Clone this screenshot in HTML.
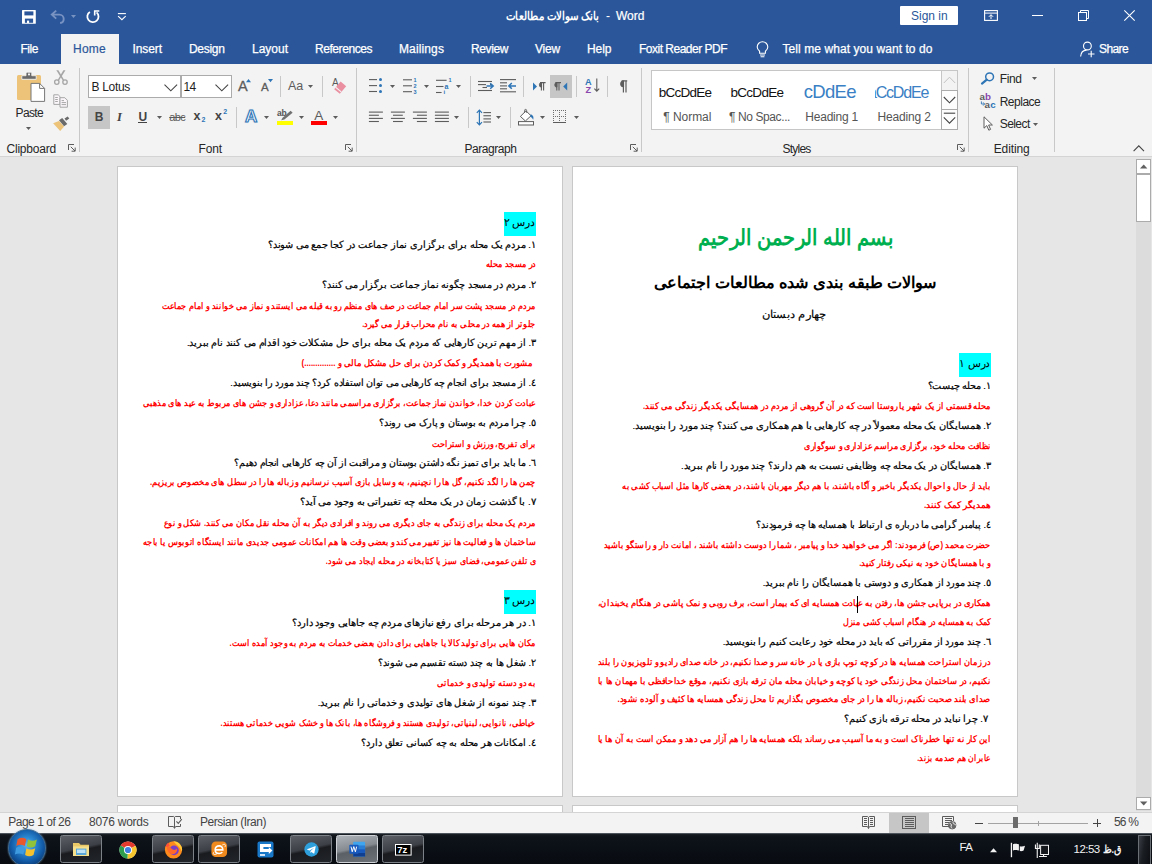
<!DOCTYPE html>
<html lang="en"><head><meta charset="utf-8"><title>Word</title><style>
*{box-sizing:border-box;margin:0;padding:0}
html,body{width:1152px;height:864px;overflow:hidden;background:#e6e6e6;font-family:"Liberation Sans",sans-serif;font-size:12px;color:#262626}
#root{position:relative;width:1152px;height:864px;overflow:hidden}
.a{position:absolute;display:block}
.t{position:absolute;display:block;white-space:nowrap;line-height:1.2}
svg{overflow:visible}
</style></head>
<body>
<div id="root">
<div class="a" style="left:0px;top:0px;width:1152px;height:64px;background:#2b579a;"></div>
<div class="a" style="left:0px;top:64px;width:1152px;height:93px;background:#f3f3f3;border-bottom:1px solid #d4d4d4;"></div>
<div class="a" style="left:61px;top:34px;width:58px;height:30px;background:#f3f3f3;"></div>
<svg class="a" style="left:22px;top:10px;" width="14" height="14" viewBox="0 0 14 14"><rect x="0" y="0" width="13.8" height="13.8" rx="0.6" fill="#fff"/><rect x="2.4" y="1.4" width="9" height="4" fill="#2b579a"/><rect x="2.9" y="8.6" width="8.2" height="4.2" fill="#2b579a"/><rect x="5" y="10.6" width="2.1" height="2.4" fill="#fff"/></svg>
<svg class="a" style="left:50px;top:9px;" width="17" height="16" viewBox="0 0 17 16"><path d="M6.2 1.6L1.8 5.6L6.2 9.6M2.4 5.6H9.4a4.3 4.3 0 0 1 4.3 4.3a4.2 4.2 0 0 1-3.6 4.1" fill="none" stroke="#7892c2" stroke-width="1.9"/></svg>
<svg class="a" style="left:70.5px;top:15.2px;" width="6" height="4" viewBox="0 0 6 4"><path d="M0 0h5L2.5 3z" fill="#7892c2"/></svg>
<svg class="a" style="left:85px;top:9px;" width="16" height="16" viewBox="0 0 16 16"><path d="M4.9 2.9A5.6 5.6 0 1 0 11.6 3.4" fill="none" stroke="#fff" stroke-width="1.8"/><path d="M9.7 6.6V2h4.6" fill="none" stroke="#fff" stroke-width="1.6"/></svg>
<svg class="a" style="left:117px;top:12px;" width="10" height="9" viewBox="0 0 10 9"><path d="M0.9 1.6h8" stroke="#fff" stroke-width="1.1"/><path d="M1.1 4.2l3.8 3.5l3.8-3.5" fill="none" stroke="#fff" stroke-width="1.1"/></svg>
<svg class="a" style="left:500px;top:4px;" width="104" height="24" viewBox="0 0 104 24"><text x="98.8" y="15.8" direction="rtl" font-family="Liberation Sans,sans-serif" font-weight="bold" font-size="11.5" fill="#fff" textLength="93" lengthAdjust="spacingAndGlyphs">بانک سوالات مطالعات</text></svg>
<span class="t" style="left:606px;top:9.0px;font-size:12px;color:#fff;">-</span>
<span class="t" style="left:616px;top:9.0px;font-size:12px;color:#fff;-webkit-text-stroke:0.2px #fff;">Word</span>
<div class="a" style="left:900px;top:6px;width:58px;height:19px;background:#fff;border-radius:1px;"></div>
<span class="t" style="left:911px;top:8.5px;font-size:12px;color:#2b579a;">Sign in</span>
<svg class="a" style="left:984px;top:10px;" width="14" height="11" viewBox="0 0 14 11"><rect x="0.6" y="0.6" width="12.8" height="9.8" fill="none" stroke="#fff" stroke-width="1.1"/><path d="M0.6 3.1h12.8" stroke="#fff" stroke-width="1"/><path d="M7 9V4.8M4.9 6.8L7 4.7l2.1 2.1" fill="none" stroke="#fff" stroke-width="1"/></svg>
<div class="a" style="left:1032px;top:15px;width:11px;height:1px;background:#fff;"></div>
<svg class="a" style="left:1077.5px;top:10px;" width="11" height="11" viewBox="0 0 11 11"><path d="M2.5 2.5V0.5h8v8h-2" fill="none" stroke="#fff" stroke-width="1"/><rect x="0.5" y="2.5" width="8" height="8" fill="none" stroke="#fff" stroke-width="1"/></svg>
<svg class="a" style="left:1123.5px;top:10px;" width="11" height="11" viewBox="0 0 11 11"><path d="M0.3 0.3l10.4 10.4M10.7 0.3L0.3 10.7" stroke="#fff" stroke-width="1.1"/></svg>
<span class="t" style="left:20.5px;top:41.5px;font-size:12px;color:#fff;-webkit-text-stroke:0.25px #fff;letter-spacing:-0.461px;">File</span>
<span class="t" style="left:132.5px;top:41.5px;font-size:12px;color:#fff;-webkit-text-stroke:0.25px #fff;letter-spacing:-0.086px;">Insert</span>
<span class="t" style="left:189px;top:41.5px;font-size:12px;color:#fff;-webkit-text-stroke:0.25px #fff;letter-spacing:-0.31px;">Design</span>
<span class="t" style="left:252px;top:41.5px;font-size:12px;color:#fff;-webkit-text-stroke:0.25px #fff;letter-spacing:-0.005px;">Layout</span>
<span class="t" style="left:315px;top:41.5px;font-size:12px;color:#fff;-webkit-text-stroke:0.25px #fff;letter-spacing:-0.438px;">References</span>
<span class="t" style="left:399px;top:41.5px;font-size:12px;color:#fff;-webkit-text-stroke:0.25px #fff;letter-spacing:0.123px;">Mailings</span>
<span class="t" style="left:471px;top:41.5px;font-size:12px;color:#fff;-webkit-text-stroke:0.25px #fff;letter-spacing:-0.393px;">Review</span>
<span class="t" style="left:535px;top:41.5px;font-size:12px;color:#fff;-webkit-text-stroke:0.25px #fff;letter-spacing:-0.199px;">View</span>
<span class="t" style="left:587px;top:41.5px;font-size:12px;color:#fff;-webkit-text-stroke:0.25px #fff;letter-spacing:-0.047px;">Help</span>
<span class="t" style="left:639px;top:41.5px;font-size:12px;color:#fff;-webkit-text-stroke:0.25px #fff;letter-spacing:-0.502px;">Foxit Reader PDF</span>
<span class="t" style="left:782.5px;top:41.5px;font-size:12px;color:#fff;-webkit-text-stroke:0.25px #fff;letter-spacing:0.071px;">Tell me what you want to do</span>
<span class="t" style="left:1099px;top:41.5px;font-size:12px;color:#fff;-webkit-text-stroke:0.25px #fff;letter-spacing:-0.606px;">Share</span>
<span class="t" style="left:73px;top:41.5px;font-size:12px;color:#2b579a;-webkit-text-stroke:0.2px #2b579a;letter-spacing:0.246px;">Home</span>
<svg class="a" style="left:756px;top:41px;" width="13" height="17" viewBox="0 0 13 17"><path d="M3.6 10.2C2 9 1.2 7.6 1.2 6a5.3 5.3 0 0 1 10.6 0c0 1.6-0.8 3-2.4 4.2v2H3.6z" fill="none" stroke="#fff" stroke-width="1.1"/><path d="M4 14h5M4.6 15.8h3.8" stroke="#fff" stroke-width="1.1"/></svg>
<svg class="a" style="left:1080px;top:41px;" width="15" height="17" viewBox="0 0 15 17"><circle cx="7.4" cy="5" r="3.9" fill="none" stroke="#fff" stroke-width="1.1"/><path d="M0.6 15.5c0.3-4 3-6.3 6-6.4" fill="none" stroke="#fff" stroke-width="1.1"/><path d="M8 13h6.5M11.2 9.8v6.4" stroke="#fff" stroke-width="1.1"/></svg>
<svg class="a" style="left:16px;top:71px;" width="30" height="32" viewBox="0 0 30 32"><rect x="1" y="4" width="24" height="25" rx="1.5" fill="#ecc378"/><path d="M5.8 8.3V4.7h4.2V2.6a1.4 1.4 0 0 1 1.4-1.4h3a1.4 1.4 0 0 1 1.4 1.4v2.1h4.4v3.6z" fill="#6a6a6a" stroke="#f3f3f3" stroke-width="0.9"/><rect x="12" y="2.5" width="2" height="1.8" fill="#f3f3f3"/><path d="M15 12.4h8.6l5 5V30.4H15z" fill="#fff" stroke="#777" stroke-width="1"/><path d="M23.6 12.4v5h5" fill="none" stroke="#777" stroke-width="1"/></svg>
<span class="t" style="left:15.6px;top:106.3px;font-size:12px;color:#262626;letter-spacing:-0.658px;">Paste</span>
<svg class="a" style="left:26px;top:127px;" width="6" height="4" viewBox="0 0 6 4"><path d="M0 0h5L2.5 3z" fill="#5c5c5c"/></svg>
<svg class="a" style="left:53px;top:70px;" width="16" height="15" viewBox="0 0 16 15"><path d="M3.3 0.2L5.4 0.2L11 9.8L9.8 10.6z" fill="#a6a6a6"/><path d="M12.5 0.2L10.4 0.2L4.8 9.8L6 10.6z" fill="#a6a6a6"/><circle cx="3.8" cy="12.1" r="2.2" fill="none" stroke="#a6a6a6" stroke-width="1.3"/><circle cx="12" cy="12.1" r="2.2" fill="none" stroke="#a6a6a6" stroke-width="1.3"/></svg>
<svg class="a" style="left:53px;top:94px;" width="16" height="14" viewBox="0 0 16 14"><path d="M0.8 0.8h4.4l1.8 1.8v7.8h-6.2z" fill="#faf6fa" stroke="#a6a6a6" stroke-width="1"/><path d="M7 3.7h4.8l2.6 2.6v6.9H7z" fill="#faf6fa" stroke="#a6a6a6" stroke-width="1"/><path d="M2.2 3.5h2.6M2.2 5.5h2.6M2.2 7.5h2.6M8.6 6.6h2.4M8.6 8.6h4.4M8.6 10.6h4.4" stroke="#a6a6a6" stroke-width="1"/></svg>
<svg class="a" style="left:53px;top:116px;" width="17" height="15.4" viewBox="0 0 17 15.4"><path d="M0.1 7.3L6 5.1l5.1 5.5L7.2 15z" fill="#ecc378"/><path d="M6 4.3L9.2 2l5.1 5.9l-3.2 2.3z" fill="#6a6a6a"/><path d="M11.5 2.4l3.2-2l1.6 2l-3.2 2.3z" fill="#6a6a6a"/></svg>
<span class="t" style="left:6.5px;top:141.7px;font-size:12px;color:#262626;letter-spacing:-0.208px;">Clipboard</span>
<svg class="a" style="left:68px;top:144px;" width="8" height="8" viewBox="0 0 8 8"><path d="M0.5 6V0.5H6" fill="none" stroke="#5c5c5c" stroke-width="1"/><path d="M2.8 2.8L7 7M7.2 3.6V7.2H3.6" fill="none" stroke="#5c5c5c" stroke-width="1"/></svg>
<div class="a" style="left:79px;top:68px;width:1px;height:84px;background:#c8c8c8;"></div>
<div class="a" style="left:88px;top:75px;width:93px;height:23px;background:#fff;border:1px solid #ababab;"></div>
<div class="a" style="left:181px;top:75px;width:51px;height:23px;background:#fff;border:1px solid #ababab;"></div>
<span class="t" style="left:91.6px;top:79.5px;font-size:12px;color:#1e1e1e;letter-spacing:-0.329px;">B Lotus</span>
<span class="t" style="left:183.6px;top:79.5px;font-size:12px;color:#1e1e1e;letter-spacing:-0.68px;">14</span>
<svg class="a" style="left:164px;top:83.5px;" width="14" height="8" viewBox="0 0 14 8"><path d="M0.5 0.6L6.8 6.8L13.1 0.6" fill="none" stroke="#444" stroke-width="1.1"/></svg>
<svg class="a" style="left:215px;top:83.5px;" width="14" height="8" viewBox="0 0 14 8"><path d="M0.5 0.6L6.8 6.8L13.1 0.6" fill="none" stroke="#444" stroke-width="1.1"/></svg>
<span class="t" style="left:238px;top:78.0px;font-size:14.5px;color:#5c5c5c;-webkit-text-stroke:0.3px #5c5c5c;letter-spacing:0.128px;">A</span>
<svg class="a" style="left:246px;top:79px;" width="6" height="4" viewBox="0 0 6 4"><path d="M0 3.2h5L2.5 0z" fill="#2e75b6"/></svg>
<span class="t" style="left:261px;top:80.8px;font-size:11.5px;color:#5c5c5c;-webkit-text-stroke:0.3px #5c5c5c;letter-spacing:0.128px;">A</span>
<svg class="a" style="left:267.8px;top:79px;" width="6" height="4" viewBox="0 0 6 4"><path d="M0 0h5L2.5 3.2z" fill="#2e75b6"/></svg>
<div class="a" style="left:280px;top:76px;width:1px;height:21px;background:#c8c8c8;"></div>
<span class="t" style="left:288px;top:78.8px;font-size:12.5px;color:#5c5c5c;letter-spacing:-0.148px;">Aa</span>
<svg class="a" style="left:308px;top:85px;" width="6" height="4" viewBox="0 0 6 4"><path d="M0 0h5L2.5 3z" fill="#5c5c5c"/></svg>
<div class="a" style="left:322px;top:76px;width:1px;height:21px;background:#c8c8c8;"></div>
<span class="t" style="left:332px;top:77.0px;font-size:10px;color:#5c5c5c;letter-spacing:-0.272px;">A</span>
<svg class="a" style="left:333px;top:81px;" width="14" height="13" viewBox="0 0 14 13"><path d="M7.6 0.6l5.6 4.6l-6.4 7.6l-5.6-4.6z" fill="#ea8fa0"/><path d="M2.6 6.2l5.6 4.6" stroke="#f3f3f3" stroke-width="1.1"/></svg>
<div class="a" style="left:88px;top:106px;width:22px;height:23px;background:#c6c6c6;"></div>
<span class="t" style="left:94.8px;top:109.7px;font-size:12px;color:#444;font-weight:bold;letter-spacing:-1.172px;">B</span>
<span class="t" style="left:117px;top:109.7px;font-size:12.5px;color:#444;font-style:italic;font-family:'Liberation Serif',serif;font-weight:bold;letter-spacing:1.5px;">I</span>
<span class="t" style="left:138.4px;top:109.5px;font-size:12px;color:#444;font-weight:bold;letter-spacing:-0.272px;">U</span>
<div class="a" style="left:138px;top:121.8px;width:9px;height:1.2px;background:#444;"></div>
<svg class="a" style="left:157px;top:116px;" width="6" height="4" viewBox="0 0 6 4"><path d="M0 0h5L2.5 3z" fill="#5c5c5c"/></svg>
<span class="t" style="left:169.2px;top:110.5px;font-size:11px;color:#5c5c5c;text-decoration:line-through;letter-spacing:-0.583px;">abc</span>
<span class="t" style="left:193.4px;top:109.3px;font-size:12.5px;color:#444;font-weight:bold;letter-spacing:0.247px;">x</span>
<span class="t" style="left:201.4px;top:116.1px;font-size:7px;color:#2e75b6;font-weight:bold;">2</span>
<span class="t" style="left:215px;top:109.3px;font-size:12.5px;color:#444;font-weight:bold;letter-spacing:0.247px;">x</span>
<span class="t" style="left:223.2px;top:108.3px;font-size:7px;color:#2e75b6;font-weight:bold;">2</span>
<div class="a" style="left:236px;top:107px;width:1px;height:21px;background:#c8c8c8;"></div>
<span class="t" style="left:245px;top:107px;font-size:17px;font-weight:bold;color:#fff;-webkit-text-stroke:1.1px #2e75b6;text-shadow:0 0 2px #9ec3ea;letter-spacing:0.719px;">A</span>
<svg class="a" style="left:264px;top:116px;" width="6" height="4" viewBox="0 0 6 4"><path d="M0 0h5L2.5 3z" fill="#5c5c5c"/></svg>
<span class="t" style="left:277px;top:108.2px;font-size:8.5px;color:#555;font-weight:bold;letter-spacing:-0.161px;">ab</span>
<svg class="a" style="left:280px;top:110px;" width="14" height="11" viewBox="0 0 14 11"><path d="M1.2 10.2l1.4-2.4L10.6 0.8l2 2L4.4 9.6z" fill="#707070"/></svg>
<div class="a" style="left:277px;top:121px;width:16px;height:4px;background:#ffff00;"></div>
<svg class="a" style="left:299px;top:116px;" width="6" height="4" viewBox="0 0 6 4"><path d="M0 0h5L2.5 3z" fill="#5c5c5c"/></svg>
<span class="t" style="left:314.3px;top:107.8px;font-size:13.5px;color:#5c5c5c;letter-spacing:0.584px;">A</span>
<div class="a" style="left:311px;top:121px;width:16px;height:4px;background:#ff0000;"></div>
<svg class="a" style="left:333px;top:116px;" width="6" height="4" viewBox="0 0 6 4"><path d="M0 0h5L2.5 3z" fill="#5c5c5c"/></svg>
<span class="t" style="left:198.6px;top:141.7px;font-size:12px;color:#262626;letter-spacing:-0.204px;">Font</span>
<svg class="a" style="left:345px;top:144px;" width="8" height="8" viewBox="0 0 8 8"><path d="M0.5 6V0.5H6" fill="none" stroke="#5c5c5c" stroke-width="1"/><path d="M2.8 2.8L7 7M7.2 3.6V7.2H3.6" fill="none" stroke="#5c5c5c" stroke-width="1"/></svg>
<div class="a" style="left:356px;top:68px;width:1px;height:84px;background:#c8c8c8;"></div>
<svg class="a" style="left:368px;top:78px;" width="15" height="15" viewBox="0 0 15 15"><path d="M1 1.6H9" stroke="#5c5c5c" stroke-width="1.1"/><path d="M1 7.6H9" stroke="#5c5c5c" stroke-width="1.1"/><path d="M1 13.5H9" stroke="#5c5c5c" stroke-width="1.1"/><circle cx="12.5" cy="1.6" r="1.5" fill="#2e75b6"/><circle cx="12.5" cy="7.6" r="1.5" fill="#2e75b6"/><circle cx="12.5" cy="13.5" r="1.5" fill="#2e75b6"/></svg>
<svg class="a" style="left:390px;top:85.3px;" width="6" height="4" viewBox="0 0 6 4"><path d="M0 0h5L2.5 3z" fill="#5c5c5c"/></svg>
<svg class="a" style="left:402px;top:78px;" width="16" height="16" viewBox="0 0 16 16"><path d="M1 1.8H10" stroke="#5c5c5c" stroke-width="1.1"/><path d="M1 7.8H10" stroke="#5c5c5c" stroke-width="1.1"/><path d="M1 13.7H10" stroke="#5c5c5c" stroke-width="1.1"/><g fill="#2e75b6" font-family="Liberation Sans" font-weight="bold" font-size="5.5"><text x="11.6" y="3.8">1</text><text x="11.6" y="9.8">2</text><text x="11.6" y="15.8">3</text></g></svg>
<svg class="a" style="left:424px;top:85.3px;" width="6" height="4" viewBox="0 0 6 4"><path d="M0 0h5L2.5 3z" fill="#5c5c5c"/></svg>
<svg class="a" style="left:435px;top:77px;" width="18" height="17" viewBox="0 0 18 17"><path d="M1 3.3H11.6" stroke="#5c5c5c" stroke-width="1.1"/><path d="M1 9.5H8.5" stroke="#5c5c5c" stroke-width="1.1"/><path d="M1 15.5H6.6" stroke="#5c5c5c" stroke-width="1.1"/><g fill="#2e75b6" font-family="Liberation Sans" font-weight="bold"><text x="13.6" y="5" font-size="5.5">1</text><text x="9.6" y="11.6" font-size="7">a</text><text x="8.4" y="17" font-size="6">i</text></g></svg>
<svg class="a" style="left:456px;top:85.3px;" width="6" height="4" viewBox="0 0 6 4"><path d="M0 0h5L2.5 3z" fill="#5c5c5c"/></svg>
<div class="a" style="left:470px;top:76px;width:1px;height:21px;background:#c8c8c8;"></div>
<svg class="a" style="left:477px;top:80px;" width="18" height="12" viewBox="0 0 18 12"><path d="M1 1.5H15" stroke="#5c5c5c" stroke-width="1.1"/><path d="M1 4.6H9" stroke="#5c5c5c" stroke-width="1.1"/><path d="M5.5 7.5H10" stroke="#5c5c5c" stroke-width="1.1"/><path d="M1 10.5H15" stroke="#5c5c5c" stroke-width="1.1"/><path d="M13 4.6H15" stroke="#5c5c5c" stroke-width="1.1"/><path d="M9.5 6H16M13.2 3.2L16.2 6L13.2 8.8" fill="none" stroke="#2e75b6" stroke-width="1.5"/></svg>
<svg class="a" style="left:499px;top:78px;" width="18" height="15" viewBox="0 0 18 15"><path d="M1 1.6H17" stroke="#5c5c5c" stroke-width="1.1"/><path d="M1 4.8H8" stroke="#5c5c5c" stroke-width="1.1"/><path d="M1 7.9H8" stroke="#5c5c5c" stroke-width="1.1"/><path d="M1 10.8H8" stroke="#5c5c5c" stroke-width="1.1"/><path d="M1 13.8H17" stroke="#5c5c5c" stroke-width="1.1"/><path d="M17 7.9H10M12.8 5L9.8 7.9L12.8 10.8" fill="none" stroke="#2e75b6" stroke-width="1.5"/></svg>
<div class="a" style="left:523px;top:76px;width:1px;height:21px;background:#c8c8c8;"></div>
<svg class="a" style="left:533px;top:82px;" width="13" height="9" viewBox="0 0 13 9"><path d="M0 0.4L4 4.4L0 8.4z" fill="#2e75b6"/><path d="M8.4 0.6v8M10.6 0.6v8M7 0.6h5.6" stroke="#5c5c5c" stroke-width="1.1" fill="none"/><path d="M8.6 0.6a2.3 2.3 0 0 0 0 4.6z" fill="#5c5c5c" stroke="#5c5c5c" stroke-width="0.8"/></svg>
<div class="a" style="left:550px;top:75px;width:22px;height:23px;background:#c6c6c6;"></div>
<svg class="a" style="left:554px;top:82px;" width="14" height="9" viewBox="0 0 14 9"><path d="M2.8 0.6v8M5.0 0.6v8M1.4 0.6h5.6" stroke="#5c5c5c" stroke-width="1.1" fill="none"/><path d="M3.0 0.6a2.3 2.3 0 0 0 0 4.6z" fill="#5c5c5c" stroke="#5c5c5c" stroke-width="0.8"/><path d="M13.2 0.4L9.2 4.4L13.2 8.4z" fill="#2e75b6"/></svg>
<div class="a" style="left:576px;top:76px;width:1px;height:21px;background:#c8c8c8;"></div>
<svg class="a" style="left:585px;top:77px;" width="16" height="17" viewBox="0 0 16 17"><g font-family="Liberation Sans" font-weight="bold" font-size="9.2"><text x="0" y="7.6" fill="#2e75b6">A</text><text x="0.4" y="15.8" fill="#8a46ad">Z</text></g><path d="M11.8 1.4v13M9.4 11.6l2.4 2.6l2.4-2.6" fill="none" stroke="#5c5c5c" stroke-width="1.1"/></svg>
<div class="a" style="left:607px;top:76px;width:1px;height:21px;background:#c8c8c8;"></div>
<svg class="a" style="left:618px;top:79.5px;" width="10" height="13" viewBox="0 0 10 13"><path d="M5.4 0.8v11.6M8 0.8v11.6M3.6 0.8h5.6" stroke="#5c5c5c" stroke-width="1.2" fill="none"/><path d="M5.6 0.8a3.1 3.1 0 0 0 0 6.2z" fill="#5c5c5c" stroke="#5c5c5c" stroke-width="0.8"/></svg>
<svg class="a" style="left:368px;top:111px;" width="16" height="12" viewBox="0 0 16 12"><path d="M0.9 1.1H14.9" stroke="#5c5c5c" stroke-width="1.1"/><path d="M0.9 4.25H10.9" stroke="#5c5c5c" stroke-width="1.1"/><path d="M0.9 7.4H14.9" stroke="#5c5c5c" stroke-width="1.1"/><path d="M0.9 10.5H10.9" stroke="#5c5c5c" stroke-width="1.1"/></svg>
<svg class="a" style="left:390.1px;top:111px;" width="16" height="12" viewBox="0 0 16 12"><path d="M0.9 1.1H14.9" stroke="#5c5c5c" stroke-width="1.1"/><path d="M3 4.25H12.8" stroke="#5c5c5c" stroke-width="1.1"/><path d="M0.9 7.4H14.9" stroke="#5c5c5c" stroke-width="1.1"/><path d="M3 10.5H12.8" stroke="#5c5c5c" stroke-width="1.1"/></svg>
<svg class="a" style="left:412px;top:111px;" width="16" height="12" viewBox="0 0 16 12"><path d="M0.9 1.1H14.9" stroke="#5c5c5c" stroke-width="1.1"/><path d="M4.9 4.25H14.9" stroke="#5c5c5c" stroke-width="1.1"/><path d="M0.9 7.4H14.9" stroke="#5c5c5c" stroke-width="1.1"/><path d="M4.9 10.5H14.9" stroke="#5c5c5c" stroke-width="1.1"/></svg>
<svg class="a" style="left:434.1px;top:111px;" width="16" height="12" viewBox="0 0 16 12"><path d="M0.9 1.1H14.9" stroke="#5c5c5c" stroke-width="1.1"/><path d="M0.9 4.25H14.9" stroke="#5c5c5c" stroke-width="1.1"/><path d="M0.9 7.4H14.9" stroke="#5c5c5c" stroke-width="1.1"/><path d="M0.9 10.5H14.9" stroke="#5c5c5c" stroke-width="1.1"/></svg>
<svg class="a" style="left:454px;top:116px;" width="6" height="4" viewBox="0 0 6 4"><path d="M0 0h5L2.5 3z" fill="#5c5c5c"/></svg>
<div class="a" style="left:468px;top:107px;width:1px;height:21px;background:#c8c8c8;"></div>
<svg class="a" style="left:476px;top:108.5px;" width="16" height="17" viewBox="0 0 16 17"><path d="M7.4 3.6H15" stroke="#5c5c5c" stroke-width="1.1"/><path d="M7.4 6.75H15" stroke="#5c5c5c" stroke-width="1.1"/><path d="M7.4 9.9H15" stroke="#5c5c5c" stroke-width="1.1"/><path d="M7.4 13H15" stroke="#5c5c5c" stroke-width="1.1"/><path d="M3.4 1.2v14.6M0.8 3.8L3.4 1.2L6 3.8M0.8 13.2L3.4 15.8L6 13.2" fill="none" stroke="#2e75b6" stroke-width="1.2"/></svg>
<svg class="a" style="left:496px;top:116px;" width="6" height="4" viewBox="0 0 6 4"><path d="M0 0h5L2.5 3z" fill="#5c5c5c"/></svg>
<div class="a" style="left:510px;top:107px;width:1px;height:21px;background:#c8c8c8;"></div>
<svg class="a" style="left:518px;top:108.5px;" width="18" height="17" viewBox="0 0 18 17"><rect x="0.5" y="12.6" width="15" height="3.4" fill="#fff" stroke="#5c5c5c" stroke-width="1"/><path d="M2.4 7.4L8 1.8l5 5l-5.6 5.2z" fill="#fff" stroke="#5c5c5c" stroke-width="1"/><path d="M6.6 4V1.4a1 1 0 0 1 2 0v2.4" fill="none" stroke="#5c5c5c" stroke-width="0.9"/><path d="M12.6 5.2c2 0.6 3.6 2.4 2.6 5.6c-0.8-1.6-1.8-2.6-3-3z" fill="#2e75b6"/></svg>
<svg class="a" style="left:540px;top:116px;" width="6" height="4" viewBox="0 0 6 4"><path d="M0 0h5L2.5 3z" fill="#5c5c5c"/></svg>
<svg class="a" style="left:553px;top:110px;" width="14" height="14" viewBox="0 0 14 14"><path d="M0 0.5H13M0 6.5H13M0.5 0V12M6.5 0V12M12.5 0V12" stroke="#6e6e6e" stroke-width="1" stroke-dasharray="1 1" fill="none" shape-rendering="crispEdges"/><path d="M0 12.5H13" stroke="#5c5c5c" stroke-width="1.2" shape-rendering="crispEdges"/></svg>
<svg class="a" style="left:574px;top:116px;" width="6" height="4" viewBox="0 0 6 4"><path d="M0 0h5L2.5 3z" fill="#5c5c5c"/></svg>
<span class="t" style="left:464.4px;top:141.7px;font-size:12px;color:#262626;letter-spacing:-0.427px;">Paragraph</span>
<svg class="a" style="left:630px;top:144px;" width="8" height="8" viewBox="0 0 8 8"><path d="M0.5 6V0.5H6" fill="none" stroke="#5c5c5c" stroke-width="1"/><path d="M2.8 2.8L7 7M7.2 3.6V7.2H3.6" fill="none" stroke="#5c5c5c" stroke-width="1"/></svg>
<div class="a" style="left:641px;top:68px;width:1px;height:84px;background:#c8c8c8;"></div>
<div class="a" style="left:651px;top:70px;width:307px;height:60px;background:#fff;border:1px solid #c6c6c6;"></div>
<div class="a" style="left:941px;top:70px;width:17px;height:60px;background:#f3f3f3;border:1px solid #c6c6c6;"></div>
<div class="a" style="left:941px;top:90px;width:17px;height:20px;background:#fdfdfd;border:1px solid #ababab;"></div>
<div class="a" style="left:941px;top:109px;width:17px;height:21px;background:#fdfdfd;border:1px solid #ababab;"></div>
<svg class="a" style="left:943px;top:76px;" width="13" height="8" viewBox="0 0 13 8"><path d="M0.8 7L6.5 1.2L12.2 7" fill="none" stroke="#c2c2c2" stroke-width="1"/></svg>
<svg class="a" style="left:943px;top:96px;" width="13" height="8" viewBox="0 0 13 8"><path d="M0.8 1L6.5 6.8L12.2 1" fill="none" stroke="#444" stroke-width="1.1"/></svg>
<svg class="a" style="left:943px;top:112px;" width="13" height="13" viewBox="0 0 13 13"><path d="M0.8 1.2H12.2" stroke="#444" stroke-width="1.1"/><path d="M0.8 5.4L6.5 11.2L12.2 5.4" fill="none" stroke="#444" stroke-width="1.1"/></svg>
<span class="t" style="left:658.7px;top:84.8px;font-size:13.5px;color:#111;letter-spacing:-0.74px;">bCcDdEe</span>
<span class="t" style="left:730.5px;top:84.8px;font-size:13.5px;color:#111;letter-spacing:-0.712px;">bCcDdEe</span>
<span class="t" style="left:803.7px;top:81.2px;font-size:18.5px;color:#3a80c4;letter-spacing:-0.686px;">cDdEe</span>
<div class="a" style="left:874.6px;top:80px;width:56px;height:24px;overflow:hidden"><span class="t" style="left:-6.6px;top:3.2px;font-size:16px;color:#3a80c4;letter-spacing:-1.2px;">aCcDdEe</span></div>
<span class="t" style="left:663.3px;top:110.0px;font-size:12px;color:#555;letter-spacing:-0.057px;">¶ Normal</span>
<span class="t" style="left:729px;top:110.0px;font-size:12px;color:#555;letter-spacing:-0.401px;">¶ No Spac...</span>
<span class="t" style="left:805.3px;top:110.0px;font-size:12px;color:#555;letter-spacing:-0.224px;">Heading 1</span>
<span class="t" style="left:877.5px;top:110.0px;font-size:12px;color:#555;letter-spacing:-0.158px;">Heading 2</span>
<span class="t" style="left:782.5px;top:141.7px;font-size:12px;color:#262626;letter-spacing:-0.781px;">Styles</span>
<svg class="a" style="left:957px;top:144px;" width="8" height="8" viewBox="0 0 8 8"><path d="M0.5 6V0.5H6" fill="none" stroke="#5c5c5c" stroke-width="1"/><path d="M2.8 2.8L7 7M7.2 3.6V7.2H3.6" fill="none" stroke="#5c5c5c" stroke-width="1"/></svg>
<div class="a" style="left:968px;top:68px;width:1px;height:84px;background:#c8c8c8;"></div>
<svg class="a" style="left:980.5px;top:72px;" width="14" height="13" viewBox="0 0 14 13"><circle cx="8.6" cy="4.8" r="3.9" fill="none" stroke="#2e75b6" stroke-width="1.5"/><path d="M5.8 7.6L1 11.6" stroke="#2e75b6" stroke-width="2.2" stroke-linecap="round"/></svg>
<span class="t" style="left:999.7px;top:71.6px;font-size:12px;color:#262626;letter-spacing:-0.336px;">Find</span>
<svg class="a" style="left:1032px;top:77.3px;" width="6" height="4" viewBox="0 0 6 4"><path d="M0 0h5L2.5 3z" fill="#5c5c5c"/></svg>
<svg class="a" style="left:980px;top:93px;" width="17" height="16" viewBox="0 0 17 16"><g font-family="Liberation Sans" font-size="9.8" font-weight="bold"><text x="-0.4" y="7.2" fill="#5c5c5c">a</text><text x="5" y="7.2" fill="#8a46ad">b</text><text x="4.6" y="15" fill="#5c5c5c">a</text><text x="10.2" y="15" fill="#2e75b6">c</text></g><path d="M1.4 8.4v2.6h3M3.2 9.4l1.4 1.6l-1.4 1.6" fill="none" stroke="#2e75b6" stroke-width="0.9"/></svg>
<span class="t" style="left:999.7px;top:94.7px;font-size:12px;color:#262626;letter-spacing:-0.49px;">Replace</span>
<svg class="a" style="left:983px;top:116px;" width="11" height="15" viewBox="0 0 11 15"><path d="M1 0.8v11.4l2.8-2.6l2 4.6l1.8-0.8l-2-4.4h3.8z" fill="#fff" stroke="#5c5c5c" stroke-width="1"/></svg>
<span class="t" style="left:999.7px;top:117.3px;font-size:12px;color:#262626;letter-spacing:-0.56px;">Select</span>
<svg class="a" style="left:1033px;top:123.2px;" width="6" height="4" viewBox="0 0 6 4"><path d="M0 0h5L2.5 3z" fill="#5c5c5c"/></svg>
<span class="t" style="left:993.7px;top:141.7px;font-size:12px;color:#262626;letter-spacing:-0.1px;">Editing</span>
<div class="a" style="left:1054px;top:68px;width:1px;height:84px;background:#c8c8c8;"></div>
<svg class="a" style="left:1133px;top:145.4px;" width="12" height="7" viewBox="0 0 12 7"><path d="M0.6 6.2L5.8 0.9L11 6.2" fill="none" stroke="#444" stroke-width="1.1"/></svg>
<div class="a" style="left:0px;top:157px;width:1152px;height:655px;background:#e6e6e6;"></div>
<div class="a" style="left:117px;top:166px;width:446px;height:631px;background:#fff;border:1px solid #c8c8c8;"></div>
<div class="a" style="left:572px;top:166px;width:446px;height:631px;background:#fff;border:1px solid #c8c8c8;"></div>
<div class="a" style="left:117px;top:805px;width:446px;height:20px;background:#fff;border:1px solid #c8c8c8;"></div>
<div class="a" style="left:572px;top:805px;width:446px;height:20px;background:#fff;border:1px solid #c8c8c8;"></div>
<div class="a" style="left:958.9px;top:352.9px;width:32.2px;height:24px;background:#00ffff;"></div>
<div class="a" style="left:504.1px;top:212px;width:32px;height:23.8px;background:#00ffff;"></div>
<div class="a" style="left:504.1px;top:590.2px;width:32px;height:23.8px;background:#00ffff;"></div>
<svg class="a" style="left:0;top:0" width="1152" height="812" viewBox="0 0 1152 812" direction="rtl" font-family="'Liberation Sans',sans-serif">
<g direction="rtl" fill="#000">
<text x="892.8" y="245.2" font-size="22" font-weight="bold" fill="#00b050" lengthAdjust="spacingAndGlyphs" textLength="195">بسم الله الرحمن الرحیم</text>
<text x="936.5" y="287.6" font-size="15.8" font-weight="bold" lengthAdjust="spacingAndGlyphs" textLength="282.6">سوالات طبقه بندی شده مطالعات اجتماعی</text>
<text x="826.7" y="318.2" font-size="11.3" stroke="#000" stroke-width="0.15" lengthAdjust="spacingAndGlyphs" textLength="65">چهارم دبستان</text>
<text x="990.2" y="367" font-size="10.8" lengthAdjust="spacingAndGlyphs" textLength="30.8">درس ۱</text>
<text x="535.1" y="226" font-size="10.8" lengthAdjust="spacingAndGlyphs" textLength="31.6">درس ۲</text>
<text x="535.1" y="604.2" font-size="10.8" lengthAdjust="spacingAndGlyphs" textLength="31.6">درس ۳</text>
<text x="990.8" y="389.0" font-size="9.7" stroke="#000" stroke-width="0.2" lengthAdjust="spacingAndGlyphs" textLength="63.2">۱. محله چیست؟</text>
<text x="990.8" y="409.0" font-size="8.6" font-weight="bold" fill="#ff0000" lengthAdjust="spacingAndGlyphs" textLength="347.9">محله قسمتی از یک شهر یا روستا است که در آن گروهی از مردم در همسایگی یکدیگر زندگی می کنند.</text>
<text x="990.8" y="428.8" font-size="9.7" stroke="#000" stroke-width="0.2" lengthAdjust="spacingAndGlyphs" textLength="358.3">۲. همسایگان یک محله معمولاً در چه کارهایی با هم همکاری می کنند؟ چند مورد را بنویسید.</text>
<text x="990.8" y="448.6" font-size="8.6" font-weight="bold" fill="#ff0000" lengthAdjust="spacingAndGlyphs" textLength="186.5">نظافت محله خود، برگزاری مراسم عزاداری و سوگواری</text>
<text x="990.8" y="468.6" font-size="9.7" stroke="#000" stroke-width="0.2" lengthAdjust="spacingAndGlyphs" textLength="309.8">۳. همسایگان در یک محله چه وظایفی نسبت به هم دارند؟ چند مورد را نام ببرید.</text>
<text x="990.8" y="489.0" font-size="8.6" font-weight="bold" fill="#ff0000" lengthAdjust="spacingAndGlyphs" textLength="368.8">باید از حال و احوال یکدیگر باخبر و آگاه باشند، با هم دیگر مهربان باشند، در بعضی کارها مثل اسباب کشی به</text>
<text x="990.8" y="507.9" font-size="8.6" font-weight="bold" fill="#ff0000" lengthAdjust="spacingAndGlyphs" textLength="66.8">همدیگر کمک کنند.</text>
<text x="990.8" y="528.1" font-size="9.7" stroke="#000" stroke-width="0.2" lengthAdjust="spacingAndGlyphs" textLength="234.4">٤. پیامبر گرامی ما درباره ی ارتباط با همسایه ها چه فرمودند؟</text>
<text x="990.8" y="547.5" font-size="8.6" font-weight="bold" fill="#ff0000" lengthAdjust="spacingAndGlyphs" textLength="387.2">حضرت محمد (ص) فرمودند: اگر می خواهید خدا و پیامبر ، شما را دوست داشته باشند ، امانت دار و راستگو باشید</text>
<text x="990.8" y="566.4" font-size="8.6" font-weight="bold" fill="#ff0000" lengthAdjust="spacingAndGlyphs" textLength="131.6">و با همسایگان خود به نیکی رفتار کنید.</text>
<text x="990.8" y="586.4" font-size="9.7" stroke="#000" stroke-width="0.2" lengthAdjust="spacingAndGlyphs" textLength="228.1">٥. چند مورد از همکاری و دوستی با همسایگان را نام ببرید.</text>
<text x="990.8" y="605.8" font-size="8.6" font-weight="bold" fill="#ff0000" lengthAdjust="spacingAndGlyphs" textLength="393.1">همکاری در برپایی جشن ها، رفتن به عیادت همسایه ای که بیمار است، برف روبی و نمک پاشی در هنگام یخبندان،</text>
<text x="990.8" y="624.9" font-size="8.6" font-weight="bold" fill="#ff0000" lengthAdjust="spacingAndGlyphs" textLength="148.3">کمک به همسایه در هنگام اسباب کشی منزل</text>
<text x="990.8" y="645.1" font-size="9.7" stroke="#000" stroke-width="0.2" lengthAdjust="spacingAndGlyphs" textLength="268.1">٦. چند مورد از مقرراتی که باید در محله خود رعایت کنیم را بنویسید.</text>
<text x="990.8" y="664.8" font-size="8.6" font-weight="bold" fill="#ff0000" lengthAdjust="spacingAndGlyphs" textLength="393.1">در زمان استراحت همسایه ها در کوچه توپ بازی یا در خانه سر و صدا نکنیم، در خانه صدای رادیو و تلویزیون را بلند</text>
<text x="990.8" y="683.9" font-size="8.6" font-weight="bold" fill="#ff0000" lengthAdjust="spacingAndGlyphs" textLength="393.1">نکنیم، در ساختمان محل زندگی خود یا کوچه و خیابان محله مان ترقه بازی نکنیم، موقع خداحافظی با مهمان ها با</text>
<text x="990.8" y="702.4" font-size="8.6" font-weight="bold" fill="#ff0000" lengthAdjust="spacingAndGlyphs" textLength="373.3">صدای بلند صحبت نکنیم، زباله ها را در جای مخصوص بگذاریم تا محل زندگی همسایه ها کثیف و آلوده نشود.</text>
<text x="987.8" y="721.9" font-size="9.7" stroke="#000" stroke-width="0.2" lengthAdjust="spacingAndGlyphs" textLength="143.5">۷. چرا نباید در محله ترقه بازی کنیم؟</text>
<text x="990.8" y="742.0" font-size="8.6" font-weight="bold" fill="#ff0000" lengthAdjust="spacingAndGlyphs" textLength="393.1">این کار نه تنها خطرناک است و به ما آسیب می رساند بلکه همسایه ها را هم آزار می دهد و ممکن است به آن ها یا</text>
<text x="990.8" y="760.6" font-size="8.6" font-weight="bold" fill="#ff0000" lengthAdjust="spacingAndGlyphs" textLength="73.6">عابران هم صدمه بزند.</text>
<text x="535.8" y="248.0" font-size="9.7" stroke="#000" stroke-width="0.2" lengthAdjust="spacingAndGlyphs" textLength="268.0">۱. مردم یک محله برای برگزاری نماز جماعت در کجا جمع می شوند؟</text>
<text x="535.8" y="267.1" font-size="8.6" font-weight="bold" fill="#ff0000" lengthAdjust="spacingAndGlyphs" textLength="50.3">در مسجد محله</text>
<text x="535.8" y="287.5" font-size="9.7" stroke="#000" stroke-width="0.2" lengthAdjust="spacingAndGlyphs" textLength="213.5">۲. مردم در مسجد چگونه نماز جماعت برگزار می کنند؟</text>
<text x="535.8" y="308.6" font-size="8.6" font-weight="bold" fill="#ff0000" lengthAdjust="spacingAndGlyphs" textLength="374.3">مردم در مسجد پشت سر امام جماعت در صف های منظم رو به قبله می ایستند و نماز می خوانند و امام جماعت</text>
<text x="535.8" y="327.3" font-size="8.6" font-weight="bold" fill="#ff0000" lengthAdjust="spacingAndGlyphs" textLength="173.6">جلوتر از همه در محلی به نام محراب قرار می گیرد.</text>
<text x="535.8" y="345.8" font-size="9.7" stroke="#000" stroke-width="0.2" lengthAdjust="spacingAndGlyphs" textLength="348.9">۳. از مهم ترین کارهایی که مردم یک محله برای حل مشکلات خود اقدام می کنند نام ببرید.</text>
<text x="532.4" y="365.6" font-size="8.6" font-weight="bold" fill="#ff0000" lengthAdjust="spacingAndGlyphs" textLength="230.9">مشورت با همدیگر و کمک کردن برای حل مشکل مالی و ..............)</text>
<text x="535.8" y="386.0" font-size="9.7" stroke="#000" stroke-width="0.2" lengthAdjust="spacingAndGlyphs" textLength="305.5">٤. از مسجد برای انجام چه کارهایی می توان استفاده کرد؟ چند مورد را بنویسید.</text>
<text x="535.8" y="405.6" font-size="8.6" font-weight="bold" fill="#ff0000" lengthAdjust="spacingAndGlyphs" textLength="393.0">عبادت کردن خدا، خواندن نماز جماعت، برگزاری مراسمی مانند دعا، عزاداری و جشن های مربوط به عید های مذهبی</text>
<text x="535.8" y="426.0" font-size="9.7" stroke="#000" stroke-width="0.2" lengthAdjust="spacingAndGlyphs" textLength="156.9">٥. چرا مردم به بوستان و پارک می روند؟</text>
<text x="535.8" y="446.7" font-size="8.6" font-weight="bold" fill="#ff0000" lengthAdjust="spacingAndGlyphs" textLength="104.1">برای تفریح، ورزش و استراحت</text>
<text x="535.8" y="466.2" font-size="9.7" stroke="#000" stroke-width="0.2" lengthAdjust="spacingAndGlyphs" textLength="301.4">٦. ما باید برای تمیز نگه داشتن بوستان و مراقبت از آن چه کارهایی انجام دهیم؟</text>
<text x="535.8" y="485.3" font-size="8.6" font-weight="bold" fill="#ff0000" lengthAdjust="spacingAndGlyphs" textLength="385.8">چمن ها را لگد نکنیم، گل ها را نچینیم، به وسایل بازی آسیب نرسانیم و زباله ها را در سطل های مخصوص بریزیم.</text>
<text x="535.8" y="505.1" font-size="9.7" stroke="#000" stroke-width="0.2" lengthAdjust="spacingAndGlyphs" textLength="236.1">۷. با گذشت زمان در یک محله چه تغییراتی به وجود می آید؟</text>
<text x="535.8" y="525.6" font-size="8.6" font-weight="bold" fill="#ff0000" lengthAdjust="spacingAndGlyphs" textLength="372.2">مردم یک محله برای زندگی به جای دیگری می روند و افرادی دیگر به آن محله نقل مکان می کنند. شکل و نوع</text>
<text x="535.8" y="544.7" font-size="8.6" font-weight="bold" fill="#ff0000" lengthAdjust="spacingAndGlyphs" textLength="393.0">ساختمان ها و فعالیت ها نیز تغییر می کند و بعضی وقت ها هم امکانات عمومی جدیدی مانند ایستگاه اتوبوس یا باجه</text>
<text x="535.8" y="563.8" font-size="8.6" font-weight="bold" fill="#ff0000" lengthAdjust="spacingAndGlyphs" textLength="210.0">ی تلفن عمومی، فضای سبز یا کتابخانه در محله ایجاد می شود.</text>
<text x="535.8" y="626.2" font-size="9.7" stroke="#000" stroke-width="0.2" lengthAdjust="spacingAndGlyphs" textLength="243.8">۱. در هر مرحله برای رفع نیازهای مردم چه جاهایی وجود دارد؟</text>
<text x="535.8" y="645.6" font-size="8.6" font-weight="bold" fill="#ff0000" lengthAdjust="spacingAndGlyphs" textLength="306.2">مکان هایی برای تولید کالا یا جاهایی برای دادن بعضی خدمات به مردم به وجود آمده است.</text>
<text x="535.8" y="665.8" font-size="9.7" stroke="#000" stroke-width="0.2" lengthAdjust="spacingAndGlyphs" textLength="158.0">۲. شغل ها به چند دسته تقسیم می شوند؟</text>
<text x="535.8" y="686.3" font-size="8.6" font-weight="bold" fill="#ff0000" lengthAdjust="spacingAndGlyphs" textLength="98.9">به دو دسته تولیدی و خدماتی</text>
<text x="535.8" y="706.3" font-size="9.7" stroke="#000" stroke-width="0.2" lengthAdjust="spacingAndGlyphs" textLength="218.0">۳. چند نمونه از شغل های تولیدی و خدماتی را نام ببرید.</text>
<text x="535.8" y="725.6" font-size="8.6" font-weight="bold" fill="#ff0000" lengthAdjust="spacingAndGlyphs" textLength="315.2">خیاطی، نانوایی، لبنیاتی، تولیدی هستند و فروشگاه ها، بانک ها و خشک شویی خدماتی هستند.</text>
<text x="535.8" y="745.9" font-size="9.7" stroke="#000" stroke-width="0.2" lengthAdjust="spacingAndGlyphs" textLength="174.3">٤. امکانات هر محله به چه کسانی تعلق دارد؟</text>
</g></svg>
<div class="a" style="left:857px;top:596px;width:1px;height:17px;background:#000;"></div>
<div class="a" style="left:1136px;top:159px;width:15px;height:652px;background:#dcdcdc;"></div>
<div class="a" style="left:1136px;top:159px;width:15px;height:14.6px;background:#fff;border:1px solid #ababab;"></div>
<svg class="a" style="left:1139.6px;top:164px;" width="8" height="5" viewBox="0 0 8 5"><path d="M0 4.4h7.4L3.7 0.4z" fill="#606060"/></svg>
<div class="a" style="left:1136px;top:174.4px;width:15px;height:47.4px;background:#fff;border:1px solid #ababab;"></div>
<div class="a" style="left:1136px;top:796.6px;width:15px;height:13.4px;background:#fff;border:1px solid #ababab;"></div>
<svg class="a" style="left:1139.6px;top:801.4px;" width="8" height="5" viewBox="0 0 8 5"><path d="M0 0.4h7.4L3.7 4.4z" fill="#606060"/></svg>
<div class="a" style="left:0px;top:812px;width:1152px;height:21px;background:#f3f3f3;border-top:1px solid #d4d4d4;"></div>
<span class="t" style="left:8.2px;top:815.2px;font-size:12px;color:#444;letter-spacing:-0.48px;">Page 1 of 26</span>
<span class="t" style="left:89px;top:815.2px;font-size:12px;color:#444;letter-spacing:-0.255px;">8076 words</span>
<svg class="a" style="left:168px;top:816px;" width="15" height="14" viewBox="0 0 15 14"><path d="M12.5 3V0.5H7.3L6.5 1.3L5.7 0.5H0.5V10.5H5.4L6.5 12.4L7.6 10.5H12.5V8M6.5 1.3V12" fill="none" stroke="#5c5c5c" stroke-width="1"/><path d="M8.4 5.4l1.9 2l3.5-4.3" fill="none" stroke="#5c5c5c" stroke-width="1.1"/></svg>
<span class="t" style="left:200px;top:815.2px;font-size:12px;color:#444;letter-spacing:-0.479px;">Persian (Iran)</span>
<div class="a" style="left:889px;top:813px;width:40px;height:20px;background:#c6c6c6;"></div>
<svg class="a" style="left:862px;top:816px;" width="14" height="14" viewBox="0 0 14 14"><path d="M6.5 1.3V12.6M0.5 0.5H5.6L6.5 1.4L7.4 0.5H12.5V10.5H7.6L6.5 12.4L5.4 10.5H0.5z" fill="none" stroke="#5c5c5c" stroke-width="1"/><path d="M2 2.5h3M2 4.5h3M2 6.5h3M2 8.5h3M8 2.5h3M8 4.5h3M8 6.5h3M8 8.5h3" stroke="#5c5c5c" stroke-width="1" shape-rendering="crispEdges"/></svg>
<svg class="a" style="left:902px;top:816px;" width="15" height="14" viewBox="0 0 15 14"><rect x="0.5" y="0.5" width="13" height="12" fill="none" stroke="#5c5c5c" stroke-width="1"/><path d="M2.5 2.5h9M2.5 4.5h9M2.5 6.5h9M2.5 8.5h9M2.5 10.5h9" stroke="#5c5c5c" stroke-width="1" shape-rendering="crispEdges"/></svg>
<svg class="a" style="left:942px;top:816px;" width="16" height="15" viewBox="0 0 16 15"><path d="M7 10.5H0.5V0.5H11.5V5" fill="none" stroke="#5c5c5c" stroke-width="1"/><path d="M2.5 2.5h7M2.5 4.5h7M2.5 6.5h4M2.5 8.5h3" stroke="#5c5c5c" stroke-width="1" shape-rendering="crispEdges"/><circle cx="10.2" cy="9.2" r="3.8" fill="#6a6a6a" stroke="#5c5c5c" stroke-width="0.8"/><path d="M7.6 7.4c1.6 0.2 2.2 1.2 1.6 2.6c-0.4 0.8 0.2 1.6 0.8 2.4M11.4 5.8c-0.8 1.2-0.2 2 1 2.2c0.8 0.2 1.2 0.6 1.4 1.4" fill="none" stroke="#f3f3f3" stroke-width="1"/></svg>
<div class="a" style="left:975px;top:822.5px;width:8px;height:1px;background:#444;"></div>
<div class="a" style="left:988px;top:823px;width:100px;height:1px;background:#a3a3a3;"></div>
<div class="a" style="left:1038px;top:821px;width:1px;height:5px;background:#a3a3a3;"></div>
<div class="a" style="left:1013px;top:817px;width:5px;height:11px;background:#6b6b6b;"></div>
<div class="a" style="left:1093px;top:822.5px;width:8px;height:1px;background:#444;"></div>
<div class="a" style="left:1096.5px;top:819px;width:1px;height:8px;background:#444;"></div>
<span class="t" style="left:1114px;top:815.2px;font-size:12px;color:#444;letter-spacing:-0.84px;">56 %</span>
<div class="a" style="left:0px;top:833px;width:1152px;height:31px;background:linear-gradient(#4d535b 0%,#4d535b 3%,#141920 5%,#0e131a 14%,#0b0f16 50%,#080b10 100%);"></div>
<div class="a" style="left:8px;top:828.5px;width:38px;height:38px;border-radius:50%;background:radial-gradient(circle at 50% 42%,#5fb4ec 0%,#2a86d0 30%,#125aa6 58%,#0a3a74 80%,#072548 100%);border:1.5px solid #3f6d96;box-shadow:0 0 1.5px #7fb2dc"></div>
<svg class="a" style="left:15.5px;top:835px;" width="24" height="24" viewBox="0 0 24 24"><path d="M1.6 4.2c3-1.9 5.8-1.7 8.8 0l-1.7 6.8c-2.8-1.6-5.6-1.6-8.4 0z" fill="#e8582c"/><path d="M12.1 4.4c3 1.9 5.8 1.7 8.8 0l-1.7 6.8c-2.8 1.6-5.6 1.6-8.4 0z" fill="#8fc43a"/><path d="M0 12.8c3-1.9 5.8-1.7 8.8 0l-1.7 6.8c-2.8-1.6-5.6-1.6-8.4 0z" fill="#3f9be0" transform="translate(0.2,0)"/><path d="M10.4 13.2c3 1.9 5.8 1.7 8.8 0l-1.7 6.8c-2.8 1.6-5.6 1.6-8.4 0z" fill="#f5c22e"/></svg>
<div class="a" style="left:60px;top:835.3px;width:42px;height:27.3px;background:linear-gradient(168deg,#5c6066 0%,#3c3f45 46%,#191b1f 54%,#22252a 100%);border:1px solid #7c8188;border-radius:2.5px;"></div>
<div class="a" style="left:152px;top:835.3px;width:42px;height:27.3px;background:linear-gradient(168deg,#5c6066 0%,#3c3f45 46%,#191b1f 54%,#22252a 100%);border:1px solid #7c8188;border-radius:2.5px;"></div>
<div class="a" style="left:197.6px;top:835.3px;width:42px;height:27.3px;background:linear-gradient(168deg,#5c6066 0%,#3c3f45 46%,#191b1f 54%,#22252a 100%);border:1px solid #7c8188;border-radius:2.5px;"></div>
<div class="a" style="left:290px;top:835.3px;width:42px;height:27.3px;background:linear-gradient(168deg,#5c6066 0%,#3c3f45 46%,#191b1f 54%,#22252a 100%);border:1px solid #7c8188;border-radius:2.5px;"></div>
<div class="a" style="left:335.6px;top:835.3px;width:42px;height:27.3px;background:linear-gradient(168deg,#aeb3b9 0%,#858a91 46%,#5b6067 54%,#6d7279 100%);border:1px solid #cfd3d8;border-radius:2.5px;"></div>
<div class="a" style="left:381.7px;top:835.3px;width:42px;height:27.3px;background:linear-gradient(168deg,#5c6066 0%,#3c3f45 46%,#191b1f 54%,#22252a 100%);border:1px solid #7c8188;border-radius:2.5px;"></div>
<svg class="a" style="left:72px;top:840px;" width="19" height="18" viewBox="0 0 19 18"><path d="M1 3h6l1.6 1.8H17V16H1z" fill="#e9c968"/><path d="M1 6.4h16V16H1z" fill="#f6e08e"/><rect x="4" y="8.6" width="10.4" height="6.4" fill="#5aa7d8"/><rect x="5" y="9.6" width="8.4" height="3.4" fill="#bfe3f5"/></svg>
<svg class="a" style="left:118.5px;top:840.5px;" width="18" height="18" viewBox="0 0 18 18"><circle cx="9" cy="9" r="8.6" fill="#fff"/><path d="M9 9L1.6 4.6A8.6 8.6 0 0 1 16.5 4.8z" fill="#e33b2e"/><path d="M9 9L16.5 4.8A8.6 8.6 0 0 1 8.4 17.6z" fill="#f7c52d"/><path d="M9 9L8.4 17.6A8.6 8.6 0 0 1 1.6 4.6z" fill="#2f9e4f"/><circle cx="9" cy="9" r="4" fill="#fff"/><circle cx="9" cy="9" r="3.1" fill="#3f7fe0"/></svg>
<svg class="a" style="left:164px;top:840px;" width="19" height="19" viewBox="0 0 19 19"><circle cx="9.5" cy="9.8" r="8.6" fill="#ff8a1c"/><path d="M9.5 1.2a8.6 8.6 0 0 1 8.4 10.4C16 6 12 5 9.5 1.2z" fill="#ffcb3b"/><circle cx="10" cy="10.4" r="4.8" fill="#7a3fc7"/><path d="M3 6c2 0 3 1 4.4 2.6C9 10.6 12 10 13 8.6c0.6 3-1.6 5.6-4.4 5.6C5 14.2 2.4 10.6 3 6z" fill="#ff6a2a"/><path d="M1.4 7c0.8-2.4 2-3.6 3.6-4.4c-0.4 1.4 0 2.4 1 3.4z" fill="#ff4f3a"/></svg>
<svg class="a" style="left:210.8px;top:840.6px;" width="16.5" height="16.5" viewBox="0 0 19 19"><rect x="0.5" y="0.5" width="18" height="18" rx="5" fill="#f08a1e"/><path d="M5.2 10.2h8.4c0-3-2-4.6-4.2-4.6c-2.6 0-4.6 1.8-4.6 4.4c0 2.8 2 4.4 4.6 4.4c1.6 0 2.8-0.6 3.6-1.6" fill="none" stroke="#fff" stroke-width="1.8"/><path d="M3 13c-1.4 2.6 1 3.4 4 1.6M13 4.6c2.6-1.6 4.6-0.8 3 2.4" fill="none" stroke="#fff" stroke-width="1"/></svg>
<svg class="a" style="left:257px;top:841px;" width="17" height="17" viewBox="0 0 17 17"><rect x="0.5" y="0.5" width="16" height="16" rx="2" fill="#1a78c9"/><path d="M3 3h11v3H6.4v2h5.4l0 0V6l3.6 3.6L11.8 13v-2H3z" fill="#fff"/><rect x="3" y="13.2" width="5" height="1.6" fill="#fff"/></svg>
<svg class="a" style="left:303.6px;top:841.6px;" width="15" height="15" viewBox="0 0 18 18"><circle cx="9" cy="9" r="8.6" fill="#2f9fdc"/><path d="M3.6 8.8l9.6-3.8c0.6-0.2 0.9 0.2 0.8 0.8l-1.6 7.6c-0.1 0.5-0.5 0.6-0.9 0.4l-2.6-1.9l-1.3 1.2l0.2-2.3l4.4-4l-5.6 3.4l-2.6-0.8c-0.5-0.2-0.5-0.5 0-0.6z" fill="#fff"/></svg>
<svg class="a" style="left:349px;top:840.6px;" width="16.6" height="16.4" viewBox="0 0 20 19"><rect x="5" y="0.6" width="14.4" height="17.8" rx="1.2" fill="#41a5ee"/><rect x="5" y="5" width="14.4" height="4.5" fill="#2b7cd3"/><rect x="5" y="9.5" width="14.4" height="4.5" fill="#185abd"/><rect x="5" y="14" width="14.4" height="4.4" fill="#103f91"/><rect x="0.4" y="4" width="11" height="11" rx="1" fill="#185abd"/><path d="M2.4 6.4l1.5 6.2l1.9-6.2l1.9 6.2l1.5-6.2" fill="none" stroke="#fff" stroke-width="1.2"/></svg>
<svg class="a" style="left:395px;top:843.5px;" width="17" height="12" viewBox="0 0 17 12"><rect x="0.5" y="0.5" width="15.6" height="10.6" fill="#000" stroke="#fff" stroke-width="1"/><text x="2.2" y="9.2" font-family="Liberation Sans" font-weight="bold" font-size="9.5" fill="#fff">7z</text></svg>
<span class="t" style="left:959.5px;top:840.8px;font-size:11.5px;color:#f2f2f2;letter-spacing:-0.531px;">FA</span>
<svg class="a" style="left:990px;top:848px;" width="8" height="5" viewBox="0 0 8 5"><path d="M0 4.2h7L3.5 0.2z" fill="#f2f2f2"/></svg>
<svg class="a" style="left:1010px;top:842px;" width="17" height="17" viewBox="0 0 17 17"><rect x="0.8" y="0.8" width="1.3" height="14.4" fill="#f2f2f2"/><path d="M3 2.2c2-0.7 3.9-0.5 5.9 0v6.2c-2-0.5-3.9-0.7-5.9 0z" fill="#f2f2f2"/><path d="M9.8 4.2c1.8 0.5 3.4 0.3 5.2-0.5l-1.4 4.9c-1.3 0.6-2.5 0.7-3.8 0.5z" fill="#f2f2f2"/></svg>
<svg class="a" style="left:1034px;top:842px;" width="17" height="17" viewBox="0 0 17 17"><rect x="6.6" y="3.3" width="7.9" height="9.2" fill="#15181c" stroke="#f2f2f2" stroke-width="1"/><path d="M5 14.45h7.9M9.55 13v1.4" stroke="#f2f2f2" stroke-width="1.1"/><path d="M1.45 2.4v4.2M5.3 2.4v4.2M0.9 6.55h5M3.25 0.8v15.3" stroke="#f2f2f2" stroke-width="1.1" fill="none"/></svg>
<span class="t" style="left:1073.6px;top:842.9px;font-size:11.5px;color:#f2f2f2;letter-spacing:-0.556px;">12:53</span>
<svg class="a" style="left:1098px;top:840px;" width="26" height="18" viewBox="0 0 26 18"><text x="23.8" y="13.3" direction="rtl" font-family="Liberation Sans,sans-serif" font-weight="bold" font-size="10.5" fill="#f2f2f2" textLength="19" lengthAdjust="spacingAndGlyphs">ق.ظ</text></svg>
<div class="a" style="left:1138px;top:834.5px;width:13px;height:29.5px;background:linear-gradient(100deg,#3a3e45,#1a1d22 45%,#0c0e12);border:1px solid #6a6f76;border-bottom:none;"></div>
</div>
</body></html>
